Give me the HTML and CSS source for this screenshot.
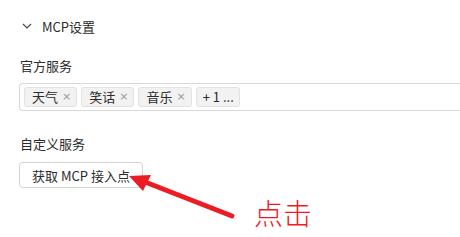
FILE: index.html
```html
<!DOCTYPE html>
<html lang="zh">
<head>
<meta charset="utf-8">
<link rel="stylesheet" href="styles.css">
</head>
<body>
<div class="page">
  <div class="section-head">
    <svg class="chev" width="10" height="6" viewBox="0 0 10 6"><path d="M1 1 L5 5 L9 1" fill="none" stroke="#444" stroke-width="1.1"/></svg>
    <span class="section-title">MCP设置</span>
  </div>
  <div class="label label-official">官方服务</div>
  <div class="tag-box">
    <span class="tag">天气<span class="x">×</span></span>
    <span class="tag">笑话<span class="x">×</span></span>
    <span class="tag">音乐<span class="x">×</span></span>
    <span class="tag more">+ 1 ...</span>
  </div>
  <div class="label label-custom">自定义服务</div>
  <button class="btn">获取 MCP 接入点</button>
</div>
<svg class="arrow" width="460" height="237" viewBox="0 0 460 237">
  <line x1="140" y1="180" x2="232" y2="216" stroke="#ec1c24" stroke-width="4.8" stroke-linecap="round"/>
  <polygon points="129,176 151,175 143,191" fill="#ec1c24"/>
</svg>
<div class="note">点击</div>
</body>
</html>
```
FILE: styles.css
```css
html, body {
  margin: 0;
  padding: 0;
  background: #fff;
  overflow: hidden;
  width: 460px;
  height: 237px;
}
body {
  font-family: "Noto Sans CJK SC", "Noto Sans", sans-serif;
  color: #2b2b2b;
  font-size: 13px;
  position: relative;
}
.page {
  padding: 17px 0 0 19px;
}
.section-head {
  display: flex;
  align-items: center;
  height: 18px;
  padding-left: 3px;
}
.chev {
  margin-right: 10px;
}
.section-title {
  font-size: 13px;
}
.label {
  padding-left: 1px;
  line-height: 18px;
}
.label-official {
  margin-top: 22px;
}
.tag-box {
  box-sizing: border-box;
  margin-top: 8px;
  width: 441px;
  height: 28px;
  border: 1px solid #d9d9d9;
  border-right: none;
  border-radius: 4px 0 0 4px;
  display: flex;
  align-items: center;
  gap: 4px;
  padding: 0 4px;
}
.tag {
  display: flex;
  align-items: center;
  height: 18px;
  border: 1px solid #e2e2e2;
  background: #f2f2f2;
  border-radius: 3px;
  padding: 0 5px 0 7px;
  font-size: 13px;
  line-height: 18px;
}
.tag .x {
  margin-left: 4px;
  color: #999;
  font-family: "DejaVu Sans", sans-serif;
  font-size: 11px;
}
.tag.more {
  padding: 0 5px 0 6px;
}
.label-custom {
  margin-top: 24px;
}
.btn {
  margin-top: 9px;
  height: 26px;
  width: 124px;
  border: 1px solid #d4d4d4;
  border-radius: 4px;
  background: #fff;
  font-family: "Noto Sans CJK SC", "Noto Sans", sans-serif;
  font-size: 13px;
  color: #2b2b2b;
  padding: 0;
  display: flex;
  align-items: center;
  justify-content: center;
}
.arrow {
  position: absolute;
  left: 0;
  top: 0;
}
.note {
  position: absolute;
  left: 254px;
  top: 193px;
  font-size: 29px;
  line-height: 38px;
  font-weight: 300;
  color: #ec1c24;
}
```
